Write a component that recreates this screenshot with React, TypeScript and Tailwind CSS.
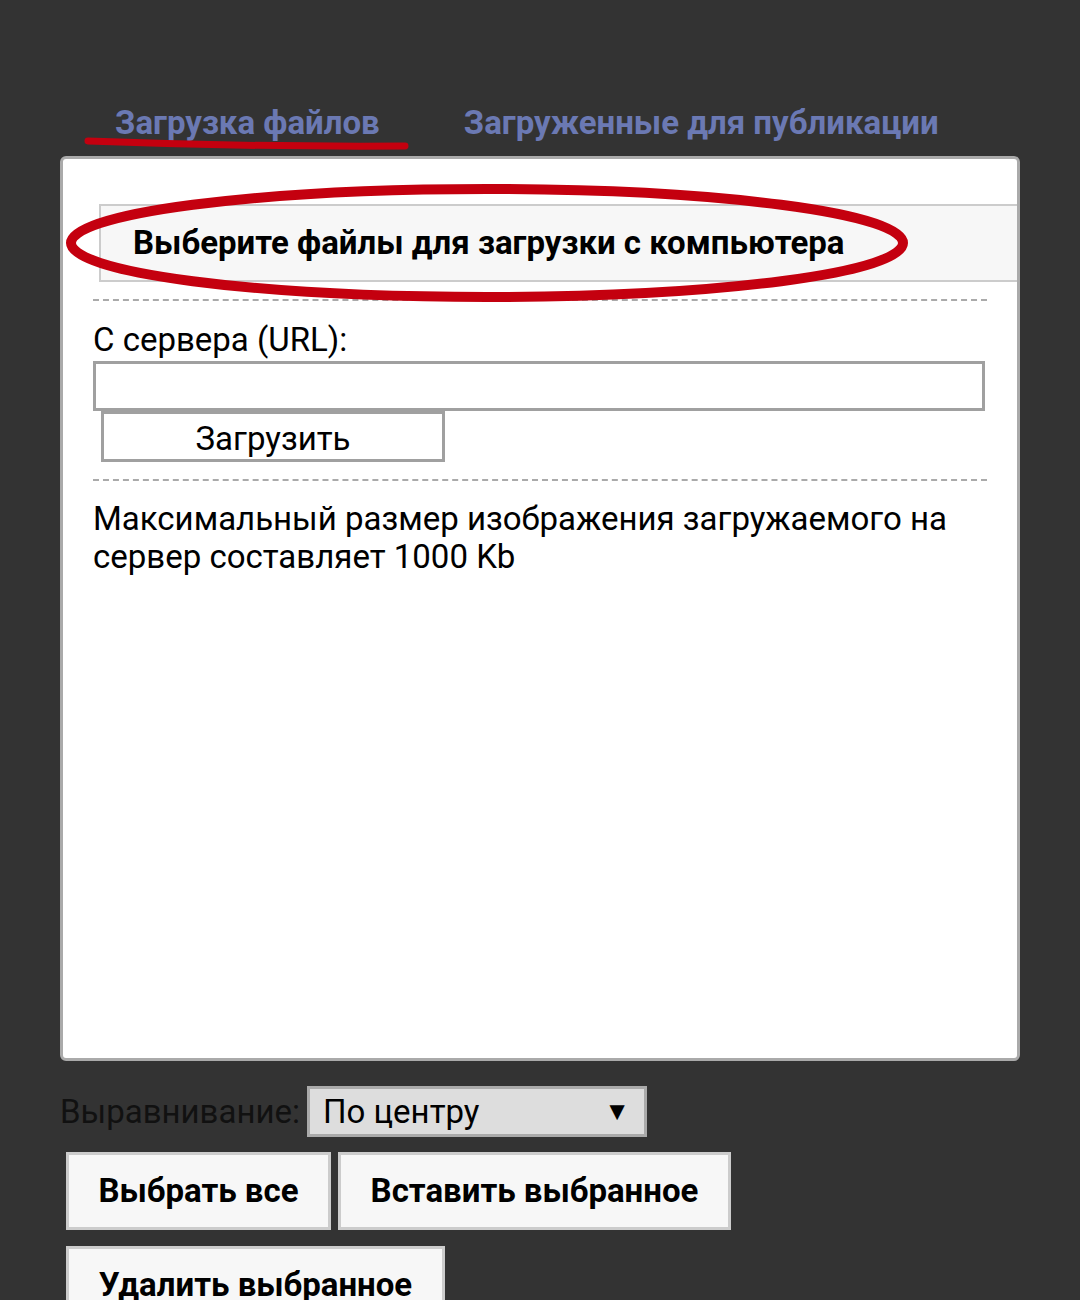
import React from 'react';

const font = { fontFamily: 'Roboto, "Noto Sans", sans-serif' };

function Annotations() {
  return (
    <svg className="pointer-events-none absolute inset-0" width="1080" height="1300" viewBox="0 0 1080 1300">
      <path d="M88 141 Q 246 147 405 146" stroke="#c4000f" strokeWidth="7" strokeLinecap="round" fill="none" />
      <ellipse cx="487" cy="243" rx="416" ry="54" stroke="#c4000f" strokeWidth="10" fill="none" />
    </svg>
  );
}

export default function App() {
  return (
    <div className="relative h-[1300px] w-[1080px] overflow-hidden bg-[#333333]" style={font}>
      <div className="px-[60px] pt-[103px]">
        <nav className="flex items-end pl-[55px] pb-[13px] text-[33px] font-bold leading-[40px] text-[#6b79b3]">
          <span>Загрузка файлов</span>
          <span className="ml-[84px]">Загруженные для публикации</span>
        </nav>

        <section className="h-[905px] w-[960px] overflow-hidden rounded-[6px] border-[3px] border-[#aaaaaa] bg-white pt-[45px]">
          <div className="ml-[36px] flex h-[78px] items-center border-y-2 border-l-2 border-[#cccccc] bg-[#f7f7f7] pl-[32px] text-[33px] font-bold text-black">
            Выберите файлы для загрузки с компьютера
          </div>

          <div className="mx-[30px] mt-[17px] border-t-2 border-dashed border-[#aaaaaa]" />

          <div className="px-[30px] pt-[18px]">
            <div className="text-[33px] leading-[42px] text-black">С сервера (URL):</div>
            <div className="mr-[2px] h-[50px] border-[3px] border-[#a0a0a0] bg-white" />
            <button className="ml-[8px] h-[51px] w-[344px] border-[3px] border-[#a0a0a0] bg-white text-[33px] text-black">
              Загрузить
            </button>
          </div>

          <div className="mx-[30px] mt-[17px] border-t-2 border-dashed border-[#aaaaaa]" />

          <p className="px-[30px] pt-[19px] text-[33px] leading-[38px] text-black">
            Максимальный размер изображения загружаемого на сервер составляет 1000 Kb
          </p>
        </section>

        <div className="mt-[25px] flex items-center gap-[7px]">
          <span className="text-[33px] text-[#111111]">Выравнивание:</span>
          <div className="flex h-[51px] w-[340px] items-center justify-between border-[3px] border-[#aaaaaa] bg-[#dddddd] pl-[13px] pr-[14px] text-[33px] text-black">
            <span>По центру</span>
            <span className="text-[26px]">▼</span>
          </div>
        </div>

        <div className="mt-[15px] flex flex-wrap gap-x-[7px] gap-y-[16px] pl-[6px]">
          <button className="h-[78px] w-[265px] border-[3px] border-[#cccccc] bg-[#f7f7f7] text-[33px] font-bold text-black">
            Выбрать все
          </button>
          <button className="h-[78px] w-[393px] border-[3px] border-[#cccccc] bg-[#f7f7f7] text-[33px] font-bold text-black">
            Вставить выбранное
          </button>
          <button className="h-[78px] w-[379px] border-[3px] border-[#cccccc] bg-[#f7f7f7] text-[33px] font-bold text-black">
            Удалить выбранное
          </button>
        </div>
      </div>
      <Annotations />
    </div>
  );
}
